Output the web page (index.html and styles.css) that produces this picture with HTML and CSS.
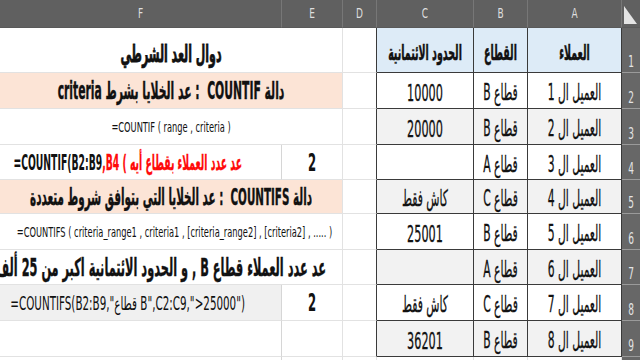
FILE: index.html
```html
<!DOCTYPE html>
<html lang="ar">
<head>
<meta charset="utf-8">
<title>دوال العد الشرطي</title>
<link rel="stylesheet" href="styles.css">
</head>
<body>
<div class="sheet">
  <!-- header row -->
  <div class="c hd"><span class="t">F</span></div>
  <div class="c hd"><span class="t">E</span></div>
  <div class="c hd"><span class="t">D</span></div>
  <div class="c hd"><span class="t">C</span></div>
  <div class="c hd"><span class="t">B</span></div>
  <div class="c hd"><span class="t">A</span></div>
  <div class="c hd corner"><svg width="18" height="28" viewBox="0 0 18 28"><polygon points="2,6 2,24 15,24" fill="#e4e4e4"/></svg></div>

  <!-- row 1 -->
  <div class="c span2 title rtl"><span class="t">دوال العد الشرطي</span></div>
  <div class="c dl"></div>
  <div class="c tb th tl rtl"><span class="t">الحدود الائتمانية</span></div>
  <div class="c tb th rtl"><span class="t">القطاع</span></div>
  <div class="c tb th rtl"><span class="t">العملاء</span></div>
  <div class="c rh"><span class="t">1</span></div>

  <!-- row 2 -->
  <div class="c span2 pink big rtl"><span class="t">دالة COUNTIF &nbsp;: عد الخلايا بشرط criteria</span></div>
  <div class="c dl"></div>
  <div class="c tb n tl"><span class="t">10000</span></div>
  <div class="c tb rtl"><span class="t">قطاع B</span></div>
  <div class="c tb rtl"><span class="t">العميل ال 1</span></div>
  <div class="c rh"><span class="t">2</span></div>

  <!-- row 3 -->
  <div class="c span2 small"><span class="t">=COUNTIF ( range , criteria )</span></div>
  <div class="c dl"></div>
  <div class="c tb n tl alt"><span class="t">20000</span></div>
  <div class="c tb alt rtl"><span class="t">قطاع B</span></div>
  <div class="c tb alt rtl"><span class="t">العميل ال 2</span></div>
  <div class="c rh"><span class="t">3</span></div>

  <!-- row 4 -->
  <div class="c fl f4"><span class="t">=COUNTIF(B2:B9<span class="red">,B4 (</span><span class="red"> عد عدد العملاء بقطاع أيه</span></span></div>
  <div class="c num"><span class="t">2</span></div>
  <div class="c dl"></div>
  <div class="c tb tl"></div>
  <div class="c tb rtl"><span class="t">قطاع A</span></div>
  <div class="c tb rtl"><span class="t">العميل ال 3</span></div>
  <div class="c rh"><span class="t">4</span></div>

  <!-- row 5 -->
  <div class="c span2 pink big f5 rtl"><span class="t">دالة COUNTIFS &nbsp;: عد الخلايا التي بتوافق شروط متعددة</span></div>
  <div class="c dl"></div>
  <div class="c tb tl alt rtl"><span class="t">كاش فقط</span></div>
  <div class="c tb alt rtl"><span class="t">قطاع C</span></div>
  <div class="c tb alt rtl"><span class="t">العميل ال 4</span></div>
  <div class="c rh"><span class="t">5</span></div>

  <!-- row 6 -->
  <div class="c span2 small f6"><span class="t">=COUNTIFS ( criteria_range1 , criteria1 , [criteria_range2] , [criteria2] , ..... )</span></div>
  <div class="c dl"></div>
  <div class="c tb n tl"><span class="t">25001</span></div>
  <div class="c tb rtl"><span class="t">قطاع B</span></div>
  <div class="c tb rtl"><span class="t">العميل ال 5</span></div>
  <div class="c rh"><span class="t">6</span></div>

  <!-- row 7 -->
  <div class="c span2 big f7"><span class="t rtl">عد عدد العملاء قطاع B , و الحدود الائتمانية اكبر من 25 ألف</span></div>
  <div class="c dl"></div>
  <div class="c tb tl alt"></div>
  <div class="c tb alt rtl"><span class="t">قطاع A</span></div>
  <div class="c tb alt rtl"><span class="t">العميل ال 6</span></div>
  <div class="c rh"><span class="t">7</span></div>

  <!-- row 8 -->
  <div class="c fl f8 grey"><span class="t">=COUNTIFS(B2:B9,"قطاع B",C2:C9,"&gt;25000")</span></div>
  <div class="c num"><span class="t">2</span></div>
  <div class="c dl"></div>
  <div class="c tb tl rtl"><span class="t">كاش فقط</span></div>
  <div class="c tb rtl"><span class="t">قطاع C</span></div>
  <div class="c tb rtl"><span class="t">العميل ال 7</span></div>
  <div class="c rh"><span class="t">8</span></div>

  <!-- row 9 -->
  <div class="c fl"></div>
  <div class="c"></div>
  <div class="c dl"></div>
  <div class="c tb n tl alt"><span class="t">36201</span></div>
  <div class="c tb alt rtl"><span class="t">قطاع B</span></div>
  <div class="c tb alt rtl"><span class="t">العميل ال 8</span></div>
  <div class="c rh"><span class="t">9</span></div>

  <!-- row 10 (partial) -->
  <div class="c fl"></div>
  <div class="c"></div>
  <div class="c"></div>
  <div class="c"></div>
  <div class="c"></div>
  <div class="c"></div>
  <div class="c rh"></div>
</div>
</body>
</html>
```

FILE: styles.css
```css
* { box-sizing: border-box; margin: 0; padding: 0; }

html, body {
  width: 640px;
  height: 360px;
  overflow: hidden;
  background: #ffffff;
}

body {
  font-family: "Liberation Sans Narrow", "DejaVu Sans Condensed", "Liberation Sans", "DejaVu Sans", sans-serif;
  color: #111111;
}

.sheet {
  display: grid;
  grid-template-columns: 282px 61px 34px 97px 54px 94px 18px;
  grid-template-rows: 28px 45px 36px 36px 35px 34px 36px 35px 36px 36px 10px;
  width: 640px;
}

.c {
  display: flex;
  align-items: center;
  justify-content: center;
  overflow: hidden;
  white-space: nowrap;
  border-right: 1px solid #e2e2e2;
  border-bottom: 1px solid #e2e2e2;
  font-size: 12px;
}

.t {
  display: inline-block;
  transform: scaleY(var(--sy, 1.9));
}

.rtl { direction: rtl; }

.span2 { grid-column: span 2; }

/* column headers */
.hd {
  background: #606060;
  color: #dedede;
  font-size: 10px;
  --sy: 1.4;
  border-right: 1px solid #777777;
  border-bottom: 1px solid #595959;
}
.corner {
  border-right: none;
}

/* row numbers */
.rh {
  background: #676767;
  color: #e4e4e4;
  font-size: 10px;
  --sy: 1.5;
  align-items: flex-end;
  padding-bottom: 5px;
  border-right: none;
  border-bottom: 1px solid #9a9a9a;
}

/* data table */
.tb {
  border-right: 1px solid #3a3a3a;
  border-bottom: 1px solid #3a3a3a;
  font-size: 12px;
  --sy: 1.9;
  padding-top: 3px;
  -webkit-text-stroke: 0.15px #111111;
}
.n { font-size: 12.5px; --sy: 1.8; }
.dl { border-right: 1px solid #3a3a3a; }
.th {
  background: #ddebf7;
  font-weight: bold;
  font-size: 10.5px;
  --sy: 2.05;
  padding-top: 4px;
  -webkit-text-stroke: 0.25px #111111;
}
.alt { background: #f2f2f2; }

/* left panel */
.title {
  font-weight: bold;
  font-size: 12.2px;
  --sy: 1.95;
  padding-top: 8px;
  -webkit-text-stroke: 0.4px #111111;
}
.pink { background: #fce4d6; }
.big {
  font-weight: bold;
  font-size: 12px;
  --sy: 2.0;
  -webkit-text-stroke: 0.2px #111111;
}
.f5 { font-size: 11.5px; --sy: 2.05; }
.small { font-size: 9.2px; --sy: 1.6; }
.fl { border-right: 1px solid #d6d6d6; }
.f4 {
  justify-content: flex-end;
  padding-right: 39px;
  font-weight: bold;
  font-size: 10.3px;
  --sy: 2.1;
}
.red { color: #ff0a0a; -webkit-text-stroke: 0.15px #ff0a0a; }
.num { font-weight: bold; font-size: 13px; --sy: 1.85; }
.f6 { padding-left: 7px; }
.f7 {
  justify-content: flex-end;
  padding-right: 16px;
  font-size: 12.6px;
  --sy: 1.95;
}
.f8 {
  justify-content: flex-end;
  padding-right: 36px;
  font-size: 11.5px;
  --sy: 1.65;
}
.grey { background: #f0f0f0; }
```
